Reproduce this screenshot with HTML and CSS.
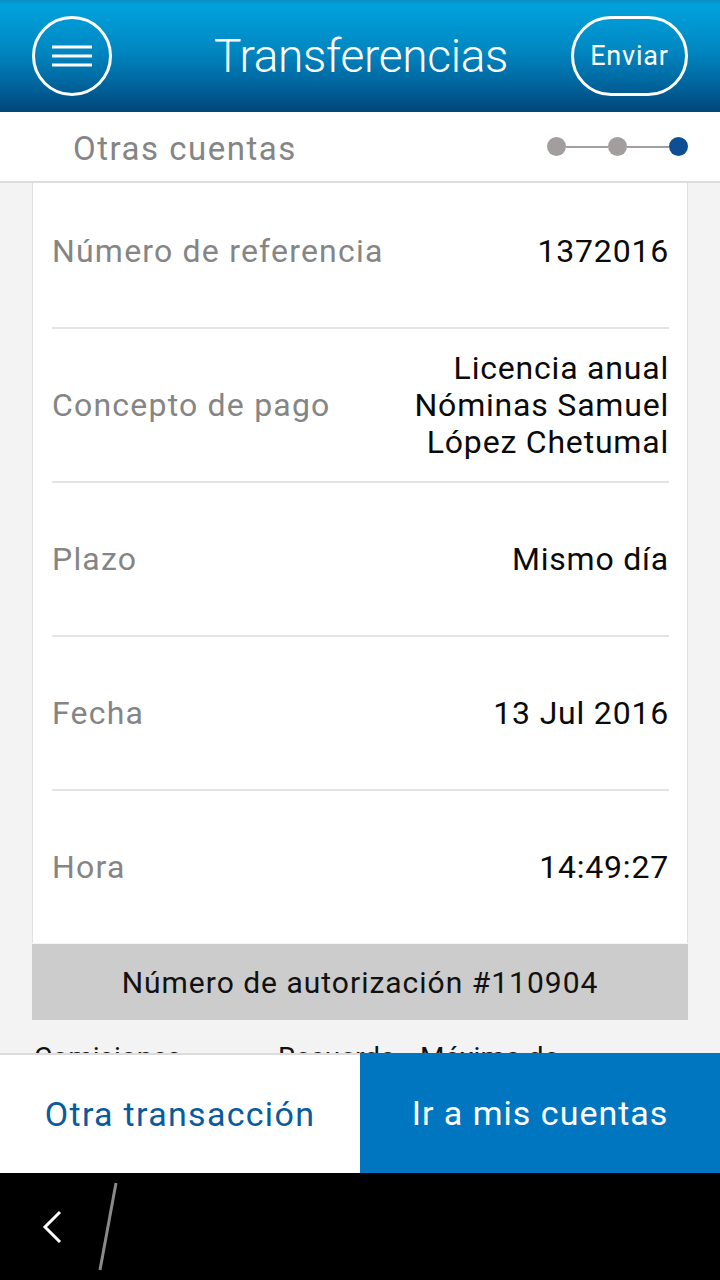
FILE: index.html
```html
<!DOCTYPE html>
<html lang="es">
<head>
<meta charset="utf-8">
<title>Transferencias</title>
<link rel="stylesheet" href="styles.css">
</head>
<body>
<div class="screen">
  <header class="topbar">
    <button class="menu-btn" aria-label="Menú">
      <svg width="40" height="22" viewBox="0 0 40 22"><g stroke="#fff" stroke-width="3" stroke-linecap="butt"><line x1="0" y1="2" x2="40" y2="2"/><line x1="0" y1="11" x2="40" y2="11"/><line x1="0" y1="20" x2="40" y2="20"/></g></svg>
    </button>
    <h1 class="title">Transferencias</h1>
    <button class="send-btn">Enviar</button>
  </header>
  <div class="subbar">
    <span class="subtitle">Otras cuentas</span>
    <div class="steps">
      <span class="dot"></span><span class="link"></span><span class="dot"></span><span class="link"></span><span class="dot active"></span>
    </div>
  </div>
  <main class="content">
    <section class="card">
      <div class="row"><span class="label">Número de referencia</span><span class="value">1372016</span></div>
      <div class="row"><span class="label">Concepto de pago</span><span class="value">Licencia anual<br>Nóminas Samuel<br>López Chetumal</span></div>
      <div class="row"><span class="label">Plazo</span><span class="value">Mismo día</span></div>
      <div class="row"><span class="label">Fecha</span><span class="value">13 Jul 2016</span></div>
      <div class="row last"><span class="label">Hora</span><span class="value">14:49:27</span></div>
    </section>
    <div class="auth">Número de autorización #110904</div>
    <p class="note"><span class="n1">Comisiones</span><span class="n2">Recuerda</span><span class="n3">Máximo de</span></p>
  </main>
  <div class="actions">
    <button class="act act-secondary">Otra transacción</button>
    <button class="act act-primary">Ir a mis cuentas</button>
  </div>
  <nav class="sysbar">
    <svg class="back" width="24" height="36" viewBox="0 0 24 36"><polyline points="19,3 4,18 19,33" fill="none" stroke="#fff" stroke-width="3"/></svg>
    <svg class="slash" width="30" height="92" viewBox="0 0 30 92"><line x1="20" y1="2" x2="4" y2="89" stroke="#8a8a8a" stroke-width="3"/></svg>
  </nav>
</div>
</body>
</html>
```
FILE: styles.css
```css
* { box-sizing: border-box; }
html, body { margin: 0; padding: 0; }
body { background: #000; font-family: Roboto, "Noto Sans", "Liberation Sans", sans-serif; }
.screen {
  width: 720px; height: 1280px; overflow: hidden;
  display: flex; flex-direction: column; background: #f3f3f3;
}
.topbar {
  height: 112px; flex: none;
  background: linear-gradient(to bottom, #0a8fc4 0px, #00a2dc 6px, #0087c2 45%, #005f97 80%, #00467a 100%);
  display: grid; grid-template-columns: 1fr auto 1fr; align-items: center;
  padding: 0 32px 0 32px;
}
.menu-btn {
  width: 80px; height: 80px; border: 3px solid #fff; border-radius: 50%;
  background: transparent; display: flex; align-items: center; justify-content: center;
  padding: 0; margin: 0; justify-self: start;
}
.title {
  margin: 0; color: #fff; font-weight: 300; font-size: 46px; letter-spacing: -0.3px;
  padding-left: 2px;
}
.send-btn {
  width: 117px; height: 80px; border: 3px solid #fff; border-radius: 40px;
  background: transparent; color: #fff; font-family: inherit; font-size: 27px; font-weight: 400;
  letter-spacing: 0.8px; padding: 0; margin: 0; justify-self: end;
}
.subbar {
  height: 71px; flex: none; background: #fff; border-bottom: 2px solid #dddddd;
  display: flex; align-items: center; justify-content: space-between;
  padding: 0 32px 0 73px; position: relative; z-index: 1;
}
.subtitle { color: #858585; font-size: 33px; font-weight: 400; letter-spacing: 1.5px; margin-top: 3px; }
.steps { display: flex; align-items: center; }
.dot { width: 19px; height: 19px; border-radius: 50%; background: #a19e9d; }
.dot.active { background: #0e4e92; }
.link { width: 42px; height: 2px; background: #a19e9d; }
.content {
  height: 870px; flex: none; overflow: hidden; padding: 0 32px;
}
.card {
  margin-top: -8px; background: #fff;
  border-left: 1px solid #e2e2e2; border-right: 1px solid #e2e2e2;
  padding: 0 18px 0 19px;
}
.row {
  height: 154px; display: flex; align-items: center; justify-content: space-between;
  border-bottom: 2px solid #e4e4e4;
}
.row.last { height: 152px; border-bottom: none; }
.label { color: #858585; font-size: 32px; letter-spacing: 1.2px; }
.value { color: #0a0a0a; font-size: 32px; text-align: right; line-height: 37px; letter-spacing: 0.8px; }
.auth {
  height: 76px; background: #cccccc; color: #111; font-size: 30px;
  display: flex; align-items: center; justify-content: center; letter-spacing: 1px;
  margin-top: 1px;
}
.note { margin: 21px 0 0 2px; font-size: 28px; color: #111; white-space: nowrap; display: flex; }
.note span { flex: none; }
.n1 { width: 244px; }
.n2 { width: 142px; }
.actions {
  height: 120px; flex: none; display: flex; border-top: 2px solid #dcdcdc; background: #fff;
}
.act {
  flex: 1; border: none; margin: 0; padding: 0; font-family: inherit; font-size: 34px; font-weight: 400;
  letter-spacing: 1.3px;
}
.act-secondary { background: #fff; color: #0a5a9e; }
.act-primary { background: #0076c0; color: #fff; margin-top: -2px; letter-spacing: 1px; }
.sysbar {
  height: 107px; flex: none; background: #000; display: flex; align-items: center;
  padding-left: 41px;
}
.slash { margin-left: 31px; }
```
